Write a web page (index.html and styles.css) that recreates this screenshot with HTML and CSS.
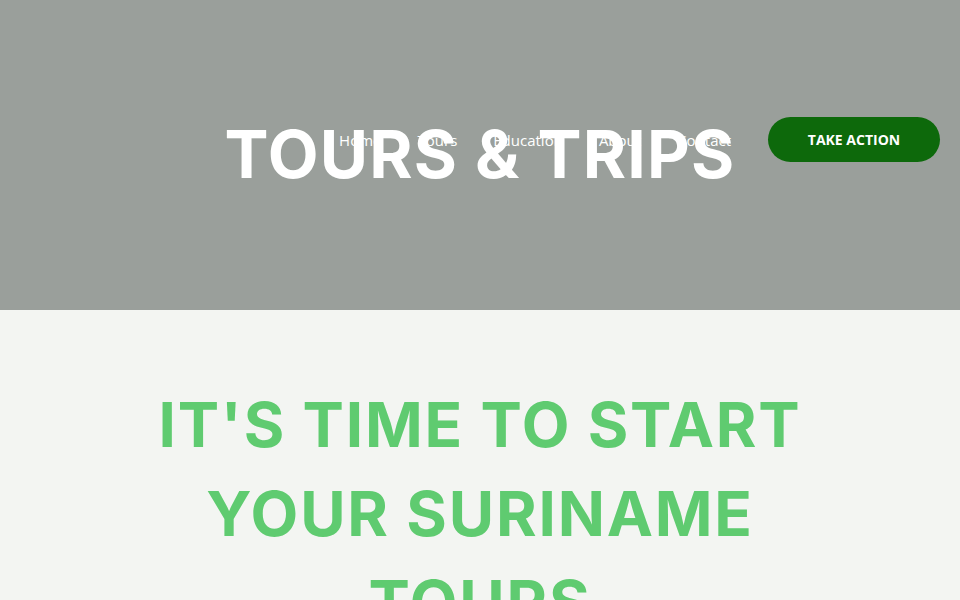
FILE: index.html
```html
<!DOCTYPE html>
<html lang="en">
<head>
<meta charset="utf-8">
<title>Tours &amp; Trips</title>
<link rel="stylesheet" href="styles.css">
</head>
<body>
<header class="site-header">
  <nav class="main-nav">
    <a href="#">Home</a>
    <a href="#">Tours</a>
    <a href="#">Education</a>
    <a href="#">About</a>
    <a href="#">Contact</a>
  </nav>
  <a class="cta" href="#">TAKE ACTION</a>
</header>
<section class="hero">
  <h1 class="hero-title">TOURS &amp; TRIPS</h1>
</section>
<section class="intro">
  <h2 class="intro-title">IT'S TIME TO START YOUR SURINAME TOURS</h2>
</section>
</body>
</html>
```
FILE: styles.css
```css
html, body {
  margin: 0;
  padding: 0;
}
body {
  background: #f3f5f2;
  font-family: "Open Sans", "Liberation Sans", sans-serif;
  overflow: hidden;
  height: 600px;
}
.site-header {
  position: absolute;
  top: 117px;
  left: 0;
  right: 0;
  display: flex;
  align-items: center;
  justify-content: flex-end;
  padding-right: 20px;
  z-index: 2;
}
.main-nav {
  display: flex;
  gap: 36px;
  margin-right: 37px;
}
.main-nav a {
  color: #ffffff;
  text-decoration: none;
  font-size: 15px;
  line-height: 20px;
}
.cta {
  display: flex;
  align-items: center;
  justify-content: center;
  width: 172px;
  height: 45px;
  border-radius: 23px;
  background: #0d690b;
  color: #ffffff;
  font-weight: 700;
  font-size: 14px;
  text-decoration: none;
}
.hero {
  height: 310px;
  background: #9a9f9b;
  display: flex;
  justify-content: center;
  box-sizing: border-box;
  padding-top: 112px;
}
.hero-title {
  margin: 0;
  color: #ffffff;
  font-family: "Inter", sans-serif;
  font-weight: 700;
  font-size: 66px;
  line-height: 84px;
  letter-spacing: 1.2px;
}
.intro {
  display: flex;
  justify-content: center;
  padding-top: 70px;
}
.intro-title {
  margin: 0;
  width: 720px;
  text-align: center;
  color: #5fcb70;
  font-family: "Inter", sans-serif;
  font-weight: 700;
  font-size: 62px;
  line-height: 89px;
  letter-spacing: 1.8px;
}
```
